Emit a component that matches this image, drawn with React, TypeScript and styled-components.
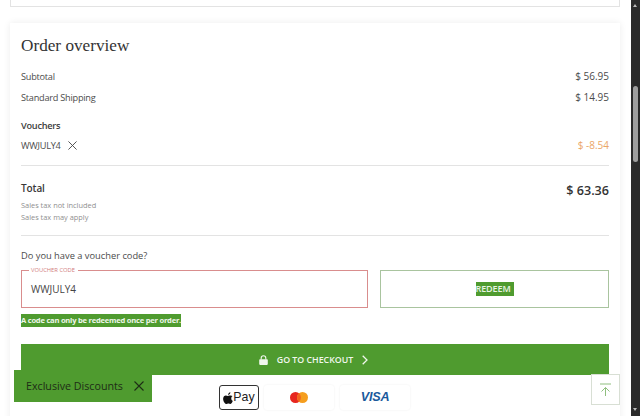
import React from "react";
import styled, { createGlobalStyle } from "styled-components";

const Global = createGlobalStyle`
  html, body { margin: 0; padding: 0; height: 100%; overflow: hidden; background: #fff; }
  body { font-family: "Open Sans", "Noto Sans", sans-serif; color: #444; }
`;
const Shell = styled.div`
  position: relative; display: flex; width: 640px; height: 416px; overflow: hidden; background: #fff;
`;
const Page = styled.main`
  flex: 1; min-width: 0; padding: 0 11px 0 10px; overflow: hidden; background: #fff;
`;
const TopCard = styled.div`
  height: 6px; border: 1px solid #e3e3e3; border-top: 0; background: #fff;
`;
const Card = styled.section`
  margin-top: 16px; height: 420px; padding: 11px; background: #fff;
  box-shadow: 0 0 7px rgba(0, 0, 0, 0.08);
`;
const Heading = styled.h2`
  margin: 0; height: 21px; font: 400 17.2px/23px "Liberation Serif", serif;
  color: #333;
`;
const Row = styled.div<{ $top: number; $h?: number }>`
  display: flex; justify-content: space-between; align-items: center;
  margin-top: ${p => p.$top}px; height: ${p => p.$h ?? 16}px;
  font-size: 9.2px; letter-spacing: -0.25px; color: #4b4b4b;
`;
const Strong = styled.span`
  font-weight: 600; color: #3c3c3c;
`;
const Amount = styled.span`
  font-size: 10px; letter-spacing: 0;
`;
const Code = styled.span`
  display: flex; align-items: center; gap: 7px;
`;
const Discount = styled.span`
  color: #eba667; font-size: 10px; letter-spacing: 0;
`;
const Rule = styled.hr<{ $top: number }>`
  margin: ${p => p.$top}px 0 0; border: 0; border-top: 1px solid #e3e3e3;
`;
const TotalRow = styled.div`
  display: flex; justify-content: space-between; align-items: flex-start; margin-top: 15px;
`;
const TotalLabel = styled.div`
  font-size: 10px; line-height: 14px; font-weight: 600; color: #383838; letter-spacing: -0.1px;
`;
const TotalValue = styled.div`
  font-size: 12.6px; line-height: 18px; font-weight: 600; color: #333; margin-top: 1px;
`;
const TaxNote = styled.div`
  margin-top: -1px; font-size: 7.4px; line-height: 12px; color: #8f8f8f;
`;
const Prompt = styled.div`
  margin-top: 13px; font-size: 9.3px; line-height: 14px; color: #4b4b4b;
`;
const VoucherRow = styled.div`
  display: grid; grid-template-columns: 347px 229px; column-gap: 12px; margin-top: 7px;
`;
const Field = styled.fieldset`
  margin: 0; padding: 0 0 0 9px; height: 38px; box-sizing: border-box; min-width: 0;
  border: 1px solid #d98d8d; border-top: 0; position: relative;
  &::before {
    content: ""; position: absolute; top: 0; left: -1px; right: -1px; height: 1px;
    background: linear-gradient(to right, #d98d8d 8px, transparent 8px, transparent 57px, #d98d8d 57px);
  }
`;
const FieldLabel = styled.label`
  position: absolute; left: 9px; top: -3px; font-size: 5.8px; line-height: 7px; color: #d17d7d; letter-spacing: 0;
`;
const FieldValue = styled.div`
  font-size: 10px; line-height: 38px; color: #444;
`;
const Redeem = styled.button`
  height: 38px; border: 1px solid #a9c49f; background: #fff; padding: 0; display: flex;
  align-items: center; justify-content: center; font-family: inherit;
`;
const RedeemText = styled.span`
  background: #4f9b2f; color: #e9f3e4; font-size: 9px; font-weight: 600; line-height: 14px; padding: 0 3px 0 0;
  width: 38px; box-sizing: border-box; white-space: nowrap; letter-spacing: -0.1px; overflow: hidden;
`;
const Hint = styled.div`
  margin-top: 6px; width: fit-content; height: 13px; background: #4f9b2f; color: #eef6ea;
  font-size: 7.6px; font-weight: 700; line-height: 13px; letter-spacing: -0.24px; white-space: nowrap;
`;
const Checkout = styled.button`
  display: flex; align-items: center; justify-content: center; gap: 9px; width: 100%; height: 31px;
  margin-top: 17px; padding: 0 3px 0 0; border: 0; background: #4f9b2f; color: #f1f7ed; font-family: inherit;
  font-size: 8.8px; font-weight: 600;
`;
const Payments = styled.div`
  display: flex; align-items: center; margin: 10px 0 0 198px; height: 25px;
`;
const ApplePay = styled.div`
  display: flex; align-items: center; justify-content: center; gap: 0; width: 40px; height: 25px; box-sizing: border-box;
  border: 1px solid #333; border-radius: 3px; color: #222; font: 500 12.4px/1 "Liberation Sans", sans-serif;
`;
const Tile = styled.div<{ $left: number }>`
  display: flex; align-items: center; justify-content: center; width: 70px; height: 25px; margin-left: ${p => p.$left}px;
  border-radius: 3px; box-shadow: 0 0 2px rgba(0,0,0,0.08);
`;
const Visa = styled.span`
  font: italic 700 12.6px/1 "Liberation Sans", sans-serif; color: #1a5a9c; letter-spacing: -0.2px;
`;
const Promo = styled.div`
  position: absolute; left: 14px; top: 370px; display: flex; align-items: center; gap: 11px; width: 138px; height: 32px;
  box-sizing: border-box; padding: 0 0 0 12px; background: #4f9b2f; color: #1e2d16; font-size: 10.7px; white-space: nowrap;
`;
const TopButton = styled.button`
  position: absolute; left: 591px; top: 374px; width: 29px; height: 31px; padding: 0; display: flex;
  align-items: center; justify-content: center; background: #fff; border: 1px solid #d8dfd4;
`;
const Scrollbar = styled.aside`
  position: relative; flex: none; width: 9px; background: #2b2b2b;
`;
const Thumb = styled.div`
  position: absolute; left: 2px; top: 86px; width: 5px; height: 76px; border-radius: 3px; background: #9f9f9f;
`;
const ArrowUp = styled.div`
  position: absolute; left: 2px; top: 4px; border: 2.5px solid transparent; border-top: 0; border-bottom: 3px solid #bbb;
`;
const ArrowDown = styled.div`
  position: absolute; left: 2px; bottom: 5px; border: 2.5px solid transparent; border-bottom: 0; border-top: 3px solid #bbb;
`;

const Cross = ({ size, color, width = 1 }: { size: number; color: string; width?: number }) => (
  <svg width={size} height={size} viewBox="0 0 10 10" fill="none" stroke={color} strokeWidth={width}>
    <path d="M.5.5l9 9M9.5.5l-9 9" />
  </svg>
);

export default function App() {
  return (
    <Shell>
      <Global />
      <Page>
        <TopCard />
        <Card>
          <Heading>Order overview</Heading>
          <Row $top={13}><span>Subtotal</span><Amount>$ 56.95</Amount></Row>
          <Row $top={5}><span>Standard Shipping</span><Amount>$ 14.95</Amount></Row>
          <Row $top={12}><Strong>Vouchers</Strong></Row>
          <Row $top={4}>
            <Code>WWJULY4 <Cross size={9} color="#444" /></Code>
            <Discount>$ -8.54</Discount>
          </Row>
          <Rule $top={12} />
          <TotalRow>
            <TotalLabel>Total</TotalLabel>
            <TotalValue>$ 63.36</TotalValue>
          </TotalRow>
          <TaxNote>Sales tax not included<br />Sales tax may apply</TaxNote>
          <Rule $top={12} />
          <Prompt>Do you have a voucher code?</Prompt>
          <VoucherRow>
            <Field>
              <FieldLabel>VOUCHER CODE</FieldLabel>
              <FieldValue>WWJULY4</FieldValue>
            </Field>
            <Redeem><RedeemText>REDEEM</RedeemText></Redeem>
          </VoucherRow>
          <Hint>A code can only be redeemed once per order.</Hint>
          <Checkout>
            <svg width="9" height="10" viewBox="0 0 9 10" fill="#f1f7ed">
              <path d="M1 4.3h7a.8.8 0 0 1 .8.8v4a.8.8 0 0 1-.8.8H1a.8.8 0 0 1-.8-.8v-4a.8.8 0 0 1 .8-.8z" />
              <path d="M2.2 4.5V3a2.3 2.3 0 0 1 4.6 0v1.5" fill="none" stroke="#f1f7ed" strokeWidth="1.1" />
            </svg>
            <span>GO TO CHECKOUT</span>
            <svg width="6" height="10" viewBox="0 0 6 10" fill="none" stroke="#f1f7ed" strokeWidth="1.3">
              <path d="M.7.7L5 5 .7 9.3" />
            </svg>
          </Checkout>
          <Payments>
            <ApplePay>
              <svg width="10" height="12" viewBox="0 0 814 1000" fill="#111">
                <path d="M788 341c-6 4-109 62-109 191 0 149 131 202 135 203-1 3-21 72-69 142-43 62-88 124-156 124s-86-40-165-40c-77 0-104 41-167 41s-106-57-156-127C43 793 0 676 0 564c0-179 117-275 231-275 61 0 112 40 150 40 37 0 94-42 163-42 27 0 122 2 244 54zM554 174c29-34 50-81 50-129 0-7-1-13-2-19-47 2-104 32-138 71-26 30-51 77-51 125 0 7 1 14 2 17 3 0 8 1 13 1 43 0 97-28 126-66z" />
              </svg>
              <span>Pay</span>
            </ApplePay>
            <Tile $left={5}>
              <svg width="18" height="11" viewBox="0 0 18 11">
                <circle cx="5.5" cy="5.5" r="5.5" fill="#e7261f" />
                <circle cx="12.5" cy="5.5" r="5.5" fill="#f59e1e" />
                <path d="M9 1.3a5.5 5.5 0 0 1 0 8.4 5.5 5.5 0 0 1 0-8.4z" fill="#f2641f" />
              </svg>
            </Tile>
            <Tile $left={6}><Visa>VISA</Visa></Tile>
          </Payments>
        </Card>
      </Page>
      <Promo>
        <span>Exclusive Discounts</span>
        <Cross size={10} color="#1e2d16" width={1.1} />
      </Promo>
      <TopButton aria-label="Back to top">
        <svg width="13" height="14" viewBox="0 0 13 14" fill="none" stroke="#8fbf7e" strokeWidth="1">
          <path d="M1 1h11M6.5 13V4.5M2.5 8.5l4-4 4 4" />
        </svg>
      </TopButton>
      <Scrollbar>
        <ArrowUp />
        <Thumb />
        <ArrowDown />
      </Scrollbar>
    </Shell>
  );
}
